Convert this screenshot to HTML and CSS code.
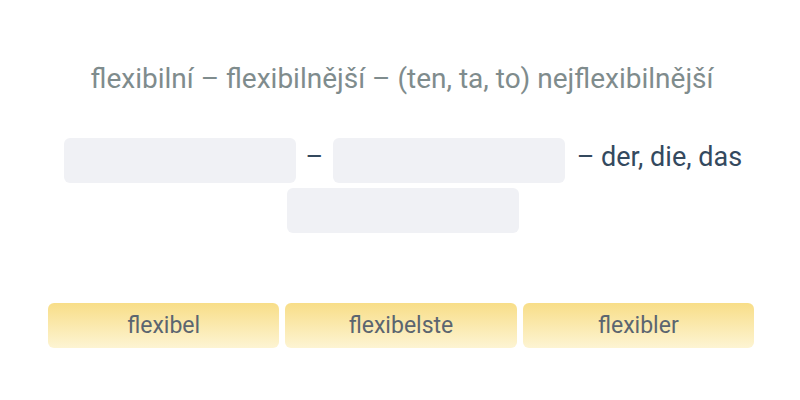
FILE: index.html
```html
<!DOCTYPE html>
<html>
<head>
<meta charset="utf-8">
<link rel="stylesheet" href="styles.css">
</head>
<body>
<div class="page">
  <div class="title">flexibilní – flexibilnější – (ten, ta, to) nejflexibilnější</div>
  <div class="sentence">
    <span class="blank"></span>
    <span class="word dash">–</span>
    <span class="blank"></span>
    <span class="word tail">– der, die, das</span>
    <span class="blank"></span>
  </div>
  <div class="options">
    <div class="opt">flexibel</div>
    <div class="opt">flexibelste</div>
    <div class="opt">flexibler</div>
  </div>
</div>
</body>
</html>
```

FILE: styles.css
```css
html, body {
  margin: 0;
  padding: 0;
  background: #ffffff;
  font-family: Roboto, "Liberation Sans", sans-serif;
}
.page {
  width: 706px;
  margin-left: 48px;
  padding-top: 61px;
}
.title {
  text-align: center;
  font-size: 28px;
  line-height: 36px;
  color: #7f8c8d;
  margin-left: 2px;
}
.sentence {
  margin-top: 41px;
  display: flex;
  flex-wrap: wrap;
  justify-content: center;
  align-items: center;
  row-gap: 5px;
  padding-left: 4px;
}
.blank {
  width: 232px;
  height: 45px;
  background: #f0f1f5;
  border-radius: 6px;
}
.word {
  font-size: 27px;
  color: #34495e;
  line-height: 36px;
  margin-top: -8px;
}
.dash {
  padding: 0 9.5px;
}
.tail {
  padding-left: 12px;
}
.options {
  margin-top: 70px;
  display: grid;
  grid-template-columns: repeat(3, 1fr);
  column-gap: 6px;
}
.opt {
  height: 45px;
  border-radius: 6px;
  background: linear-gradient(to bottom, #f8de88, #fdf4d3);
  display: flex;
  align-items: center;
  justify-content: center;
  font-size: 23px;
  color: #5b6570;
}
```
